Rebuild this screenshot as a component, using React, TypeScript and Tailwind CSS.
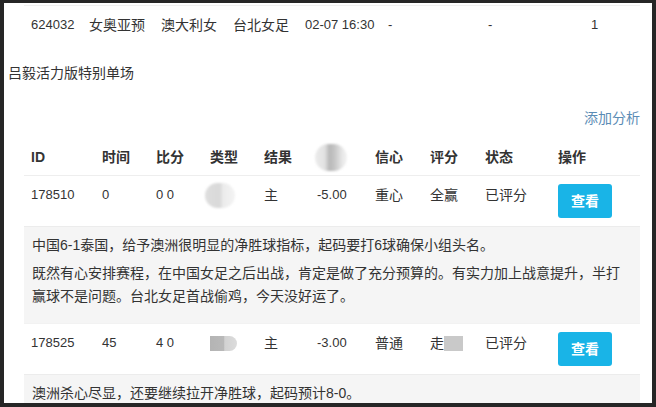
import React from "react";

const font = { fontFamily: '"Liberation Sans", "Noto Sans CJK SC", sans-serif' };

const cols = "grid grid-cols-[71px_54px_54px_54px_53px_58px_55px_55px_73px_1fr]";

function Cell({ children, num }: { children?: React.ReactNode; num?: boolean }) {
  return (
    <div className={`pl-[7px] leading-[22px] whitespace-nowrap ${num ? "text-[13px]" : "text-[14px]"}`}>
      {children}
    </div>
  );
}

function ViewBtn() {
  return (
    <div className="pl-[7px]">
      <div className="w-[54px] h-[34px] rounded-[3px] bg-[#19b4e7] text-white text-[14px] font-semibold flex items-center justify-center">
        查看
      </div>
    </div>
  );
}

export default function App() {
  return (
    <div
      className="w-[656px] h-[407px] bg-[#262626] pt-[3px] pl-[4px] pr-[4px] pb-[4px] overflow-hidden text-[#333]"
      style={font}
    >
      <div className="bg-white h-full overflow-hidden">
        {/* top row */}
        <div className="ml-[20px] mr-[12px] mt-[2px] border-t border-[#f0f0f0] pt-[8px] grid grid-cols-[58px_72px_72px_72px_83px_100px_103px_56px]">
          <Cell num>624032</Cell>
          <Cell>女奥亚预</Cell>
          <Cell>澳大利女</Cell>
          <Cell>台北女足</Cell>
          <Cell num>02-07 16:30</Cell>
          <Cell num>-</Cell>
          <Cell num>-</Cell>
          <Cell num>1</Cell>
        </div>

        {/* title */}
        <div className="ml-[4px] mt-[26px] text-[14px] leading-[22px]">吕毅活力版特别单场</div>

        {/* add analysis */}
        <div className="mr-[12px] mt-[23px] flex justify-end">
          <span className="text-[14px] leading-[22px] text-[#5b8cb5]">添加分析</span>
        </div>

        {/* table */}
        <div className="ml-[20px] mr-[12px] mt-[9px]">
          <div className={`${cols} pt-[8px] pb-[7px] border-b border-[#eeeeee] font-bold items-start`}>
            <Cell>ID</Cell>
            <Cell>时间</Cell>
            <Cell>比分</Cell>
            <Cell>类型</Cell>
            <Cell>结果</Cell>
            <div className="pl-[7px] h-[22px] flex items-center">
              <div className="shrink-0 -ml-[2px] w-[32px] h-[27px] rounded-full blur-[1px] bg-[linear-gradient(90deg,#ececec_0%,#e2e2e2_30%,#b8b8b8_45%,#c4c4c4_60%,#e8e8e8_85%,#f2f2f2_100%)]" />
            </div>
            <Cell>信心</Cell>
            <Cell>评分</Cell>
            <Cell>状态</Cell>
            <Cell>操作</Cell>
          </div>

          {/* row 1 */}
          <div className={`${cols} pt-[8px] pb-[8px] items-start`}>
            <Cell num>178510</Cell>
            <Cell num>0</Cell>
            <Cell num>0 0</Cell>
            <div className="pl-[7px] h-[22px] flex items-center">
              <div className="shrink-0 -ml-[5px] w-[30px] h-[25px] rounded-full blur-[1px] bg-[linear-gradient(90deg,#dedede_0%,#d9d9d9_50%,#ececec_60%,#f3f3f3_100%)]" />
            </div>
            <Cell>主</Cell>
            <Cell num>-5.00</Cell>
            <Cell>重心</Cell>
            <Cell>全赢</Cell>
            <Cell>已评分</Cell>
            <ViewBtn />
          </div>

          {/* analysis 1 */}
          <div className="border-t border-[#ececec] bg-[#f5f5f5] px-[8px] pt-[7px] pb-[10px] text-[14px] leading-[23px]">
            <p className="mb-[5px]">中国6-1泰国，给予澳洲很明显的净胜球指标，起码要打6球确保小组头名。</p>
            <p className="mb-[5px]">
              既然有心安排赛程，在中国女足之后出战，肯定是做了充分预算的。有实力加上战意提升，半打赢球不是问题。台北女足首战偷鸡，今天没好运了。
            </p>
          </div>

          {/* row 2 */}
          <div className={`${cols} border-t border-[#f2f2f2] pt-[8px] pb-[8px] items-start`}>
            <Cell num>178525</Cell>
            <Cell num>45</Cell>
            <Cell num>4 0</Cell>
            <div className="pl-[7px] h-[22px] flex items-center">
              <div className="shrink-0 w-[27px] h-[15px] rounded-r-full blur-[0.5px] bg-[linear-gradient(90deg,#b4b4b4_0%,#b9b9b9_50%,#d2d2d2_55%,#dcdcdc_100%)]" />
            </div>
            <Cell>主</Cell>
            <Cell num>-3.00</Cell>
            <Cell>普通</Cell>
            <div className="pl-[7px] h-[22px] flex items-center text-[14px] whitespace-nowrap">
              <span>走</span>
              <span className="inline-block w-[19px] h-[15px] bg-[#c9c9c9] blur-[0.5px]" />
            </div>
            <Cell>已评分</Cell>
            <ViewBtn />
          </div>

          {/* analysis 2 */}
          <div className="border-t border-[#ececec] bg-[#f5f5f5] px-[8px] pt-[7px] pb-[10px] text-[14px] leading-[23px]">
            <p>澳洲杀心尽显，还要继续拉开净胜球，起码预计8-0。</p>
          </div>
        </div>
      </div>
    </div>
  );
}
